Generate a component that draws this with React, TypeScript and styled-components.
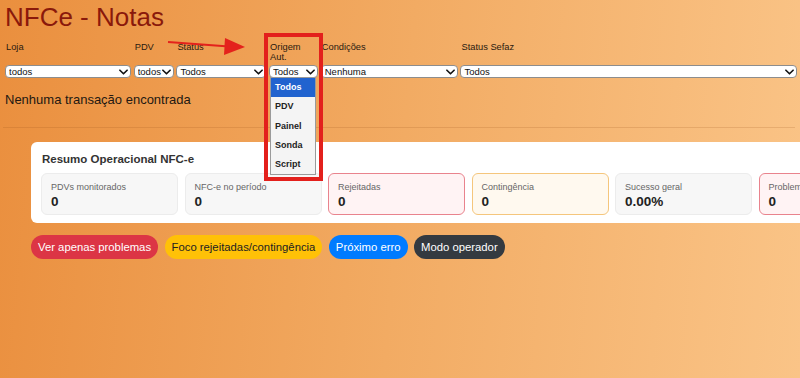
import React from 'react';
import styled, { createGlobalStyle } from 'styled-components';

const GlobalStyle = createGlobalStyle`
  html, body {
    margin: 0;
    padding: 0;
    overflow: hidden;
  }
  body {
    min-height: 378px;
    background: linear-gradient(95deg, #ea8f3e 0%, #f2ab63 50%, #fac487 100%);
    font-family: 'Liberation Sans', Arial, sans-serif;
  }
`;

type Filter = { label: string; value: string; width: number };

const filters: Filter[] = [
  { label: 'Loja', value: 'todos', width: 125 },
  { label: 'PDV', value: 'todos', width: 39 },
  { label: 'Status', value: 'Todos', width: 89 },
  { label: 'Origem Aut.', value: 'Todos', width: 48 },
  { label: 'Condições', value: 'Nenhuma', width: 136 },
  { label: 'Status Sefaz', value: 'Todos', width: 336 },
];

const origemOptions = ['Todos', 'PDV', 'Painel', 'Sonda', 'Script'];

type Tone = 'plain' | 'danger' | 'warning';

const stats: { label: string; value: string; tone: Tone }[] = [
  { label: 'PDVs monitorados', value: '0', tone: 'plain' },
  { label: 'NFC-e no período', value: '0', tone: 'plain' },
  { label: 'Rejeitadas', value: '0', tone: 'danger' },
  { label: 'Contingência', value: '0', tone: 'warning' },
  { label: 'Sucesso geral', value: '0.00%', tone: 'plain' },
  { label: 'Problemas', value: '0', tone: 'danger' },
];

type Variant = 'red' | 'yellow' | 'blue' | 'dark';

const actions: { label: string; variant: Variant }[] = [
  { label: 'Ver apenas problemas', variant: 'red' },
  { label: 'Foco rejeitadas/contingência', variant: 'yellow' },
  { label: 'Próximo erro', variant: 'blue' },
  { label: 'Modo operador', variant: 'dark' },
];

const Chevron: React.FC = () => (
  <ChevronIcon viewBox="0 0 10 6" width={9} height={6}>
    <path d="M1 1 L5 5 L9 1" fill="none" stroke="#111" strokeWidth={1.8} strokeLinecap="round" strokeLinejoin="round" />
  </ChevronIcon>
);

const App: React.FC = () => {
  return (
    <Page>
      <GlobalStyle />
      <Title>NFCe - Notas</Title>

      <FilterRow>
        {filters.map((f) => (
          <FilterCol key={f.label} $width={f.width}>
            <FilterLabel>{f.label}</FilterLabel>
            <SelectWrap>
              <Select defaultValue={f.value}>
                <option>{f.value}</option>
              </Select>
              <Chevron />
              {f.label === 'Origem Aut.' && (
                <DropList>
                  {origemOptions.map((o, i) => (
                    <DropItem key={o} $active={i === 0}>
                      {o}
                    </DropItem>
                  ))}
                </DropList>
              )}
            </SelectWrap>
          </FilterCol>
        ))}
      </FilterRow>

      <EmptyMessage>Nenhuma transação encontrada</EmptyMessage>
      <Divider />

      <SummaryCard>
        <SummaryTitle>Resumo Operacional NFC-e</SummaryTitle>
        <StatGrid>
          {stats.map((s) => (
            <StatBox key={s.label} $tone={s.tone}>
              <StatLabel>{s.label}</StatLabel>
              <StatValue>{s.value}</StatValue>
            </StatBox>
          ))}
        </StatGrid>
      </SummaryCard>

      <ActionRow>
        {actions.map((a) => (
          <PillButton key={a.label} $variant={a.variant}>
            {a.label}
          </PillButton>
        ))}
      </ActionRow>

      {/* annotation overlays */}
      <Highlight />
      <Arrow viewBox="0 0 80 20" width={80} height={20}>
        <line x1="1" y1="5" x2="62" y2="9.5" stroke="#e4221c" strokeWidth={2.2} />
        <polygon points="58,1 78,10 57,18" fill="#e4221c" />
      </Arrow>
    </Page>
  );
};

const Page = styled.div`
  position: relative;
  padding: 2px 5px 0 5px;
  min-height: 376px;
  box-sizing: border-box;
`;

const Title = styled.h1`
  margin: 0;
  font-size: 26px;
  line-height: 30px;
  font-weight: normal;
  color: #8a190b;
`;

const FilterRow = styled.div`
  display: flex;
  align-items: stretch;
  gap: 3.7px;
  margin-top: 10px;
  padding-left: 1px;
`;

const FilterCol = styled.div<{ $width: number }>`
  display: flex;
  flex-direction: column;
  justify-content: space-between;
  width: ${(p) => p.$width}px;
  flex-shrink: 0;
`;

const FilterLabel = styled.label`
  font-size: 9.3px;
  line-height: 10px;
  color: #2a1a10;
  padding-left: 0;
  margin-bottom: 3px;
  min-height: 20px;
`;

const SelectWrap = styled.div`
  position: relative;
  margin-left: -1px;
`;

const Select = styled.select`
  appearance: none;
  display: block;
  width: 100%;
  height: 13px;
  box-sizing: border-box;
  padding: 0 0 0 3px;
  border: 1px solid #8d8d8d;
  border-radius: 4px;
  background: #fff;
  font-family: 'Liberation Sans', Arial, sans-serif;
  font-size: 9.5px;
  line-height: 11px;
  color: #111;
`;

const ChevronIcon = styled.svg`
  position: absolute;
  right: 3px;
  top: 4px;
  pointer-events: none;
`;

const DropList = styled.div`
  position: absolute;
  left: 1px;
  top: 12px;
  width: 46px;
  box-sizing: border-box;
  background: #f4f4f4;
  border: 1px solid #9a9a9a;
  z-index: 5;
`;

const DropItem = styled.div<{ $active: boolean }>`
  height: 19.3px;
  line-height: 19.3px;
  padding-left: 4px;
  font-size: 9px;
  font-weight: bold;
  color: ${(p) => (p.$active ? '#fff' : '#222')};
  background: ${(p) => (p.$active ? '#2163cf' : 'transparent')};
`;

const EmptyMessage = styled.p`
  margin: 14px 0 0 0;
  font-size: 13px;
  line-height: 16px;
  color: #231812;
`;

const Divider = styled.hr`
  margin: 19px 0 0 -2px;
  border: 0;
  border-top: 1px solid rgba(150, 80, 20, 0.18);
`;

const SummaryCard = styled.div`
  margin: 14px 0 0 26px;
  width: max-content;
  background: #fff;
  border-radius: 6px;
  padding: 9px 10px 8px 10px;
`;

const SummaryTitle = styled.div`
  font-size: 11.5px;
  line-height: 16px;
  font-weight: bold;
  color: #333;
  padding-left: 1px;
`;

const StatGrid = styled.div`
  display: grid;
  grid-template-columns: repeat(6, 137px);
  gap: 6.5px;
  margin-top: 6px;
`;

const toneStyles: Record<Tone, { bg: string; border: string }> = {
  plain: { bg: '#f7f7f7', border: '#ececec' },
  danger: { bg: '#fff3f4', border: '#e9838d' },
  warning: { bg: '#fff9ef', border: '#f5c67c' },
};

const StatBox = styled.div<{ $tone: Tone }>`
  box-sizing: border-box;
  height: 42px;
  padding: 7px 9px;
  border-radius: 6px;
  background: ${(p) => toneStyles[p.$tone].bg};
  border: 1px solid ${(p) => toneStyles[p.$tone].border};
`;

const StatLabel = styled.div`
  font-size: 9px;
  line-height: 12px;
  color: #666;
`;

const StatValue = styled.div`
  font-size: 13.5px;
  line-height: 17px;
  font-weight: bold;
  color: #222;
`;

const ActionRow = styled.div`
  display: flex;
  gap: 6.5px;
  margin: 12px 0 0 26px;
`;

const buttonColors: Record<Variant, { bg: string; fg: string }> = {
  red: { bg: '#dc3545', fg: '#fff' },
  yellow: { bg: '#ffc107', fg: '#222' },
  blue: { bg: '#007bff', fg: '#fff' },
  dark: { bg: '#343a40', fg: '#fff' },
};

const PillButton = styled.button<{ $variant: Variant }>`
  height: 24px;
  padding: 0 7px;
  border: 0;
  border-radius: 12px;
  font-family: 'Liberation Sans', Arial, sans-serif;
  font-size: 11.3px;
  background: ${(p) => buttonColors[p.$variant].bg};
  color: ${(p) => buttonColors[p.$variant].fg};
`;

const Highlight = styled.div`
  position: absolute;
  left: 264px;
  top: 33px;
  width: 59px;
  height: 148px;
  box-sizing: border-box;
  border: 4px solid #e3201c;
  pointer-events: none;
  z-index: 6;
`;

const Arrow = styled.svg`
  position: absolute;
  left: 167px;
  top: 37px;
  z-index: 6;
`;

export default App;
